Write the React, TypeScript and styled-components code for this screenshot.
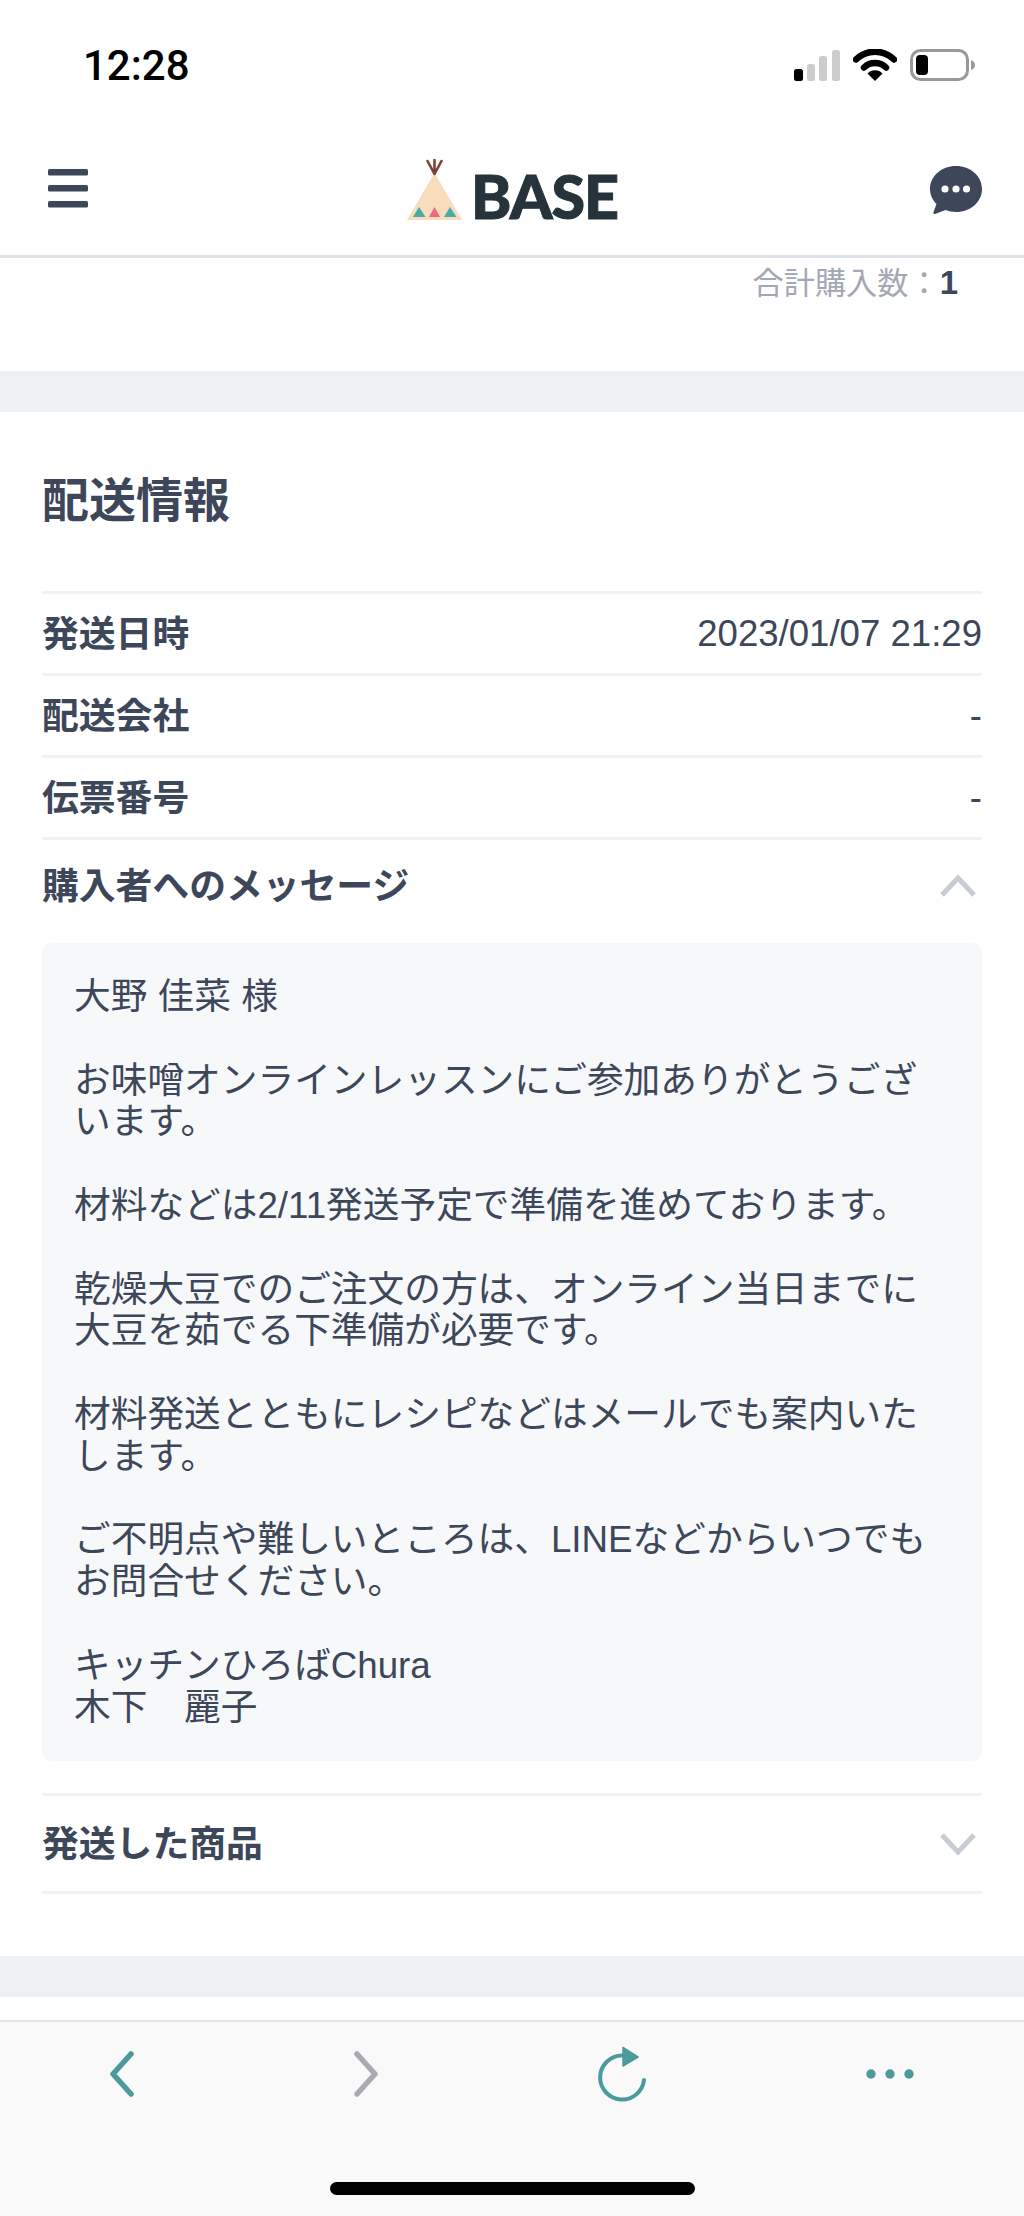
import React from "react";
import styled, { createGlobalStyle } from "styled-components";

const GlobalStyle = createGlobalStyle`
  html, body {
    margin: 0;
    padding: 0;
    background: #fff;
  }
`;

const Page = styled.div`
  display: flex;
  flex-direction: column;
  width: 1024px;
  height: 2216px;
  overflow: hidden;
  color: #3d4759;
  font-family: "Liberation Sans", "Noto Sans CJK JP", sans-serif;
`;

const Header = styled.header`
  flex: none;
  height: 258px;
  box-sizing: border-box;
  border-bottom: 3px solid #dfe3ea;
`;

const StatusBar = styled.div`
  display: flex;
  align-items: center;
  justify-content: space-between;
  height: 130px;
  padding: 0 48px 0 83px;
`;

const Time = styled.span`
  font-family: Roboto, "Liberation Sans", sans-serif;
  font-size: 42px;
  font-weight: 500;
  color: #000;
`;

const StatusIcons = styled.div`
  display: flex;
  align-items: center;
  gap: 13px;
`;

const Nav = styled.nav`
  display: grid;
  grid-template-columns: 1fr auto 1fr;
  align-items: center;
  height: 125px;
  padding: 0 42px 5px;
  box-sizing: border-box;
`;

const NavLeft = styled.div`
  display: flex;
  padding-left: 6px;
`;

const NavRight = styled.div`
  display: flex;
  justify-content: flex-end;
`;

const Logo = styled.div`
  display: flex;
  align-items: flex-end;
  gap: 7px;
`;

const LogoText = styled.span`
  font-family: Lato, "Liberation Sans", sans-serif;
  font-size: 61px;
  font-weight: 900;
  line-height: 46px;
  color: #27333a;
  letter-spacing: -1px;
  padding-bottom: 2px;
  -webkit-text-stroke: 1px #27333a;
`;

const Main = styled.main`
  flex: 1;
  min-height: 0;
`;

const TotalRow = styled.div`
  height: 113px;
  box-sizing: border-box;
  padding: 7px 66px 0 0;
  text-align: right;
  font-size: 31.2px;
  line-height: 36px;
  color: #a3a8b4;
`;

const TotalCount = styled.b`
  font-size: 33px;
  color: #3d4759;
`;

const Band = styled.div`
  height: 41px;
  background: #eff0f4;
`;

const Card = styled.section`
  padding: 0 42px 62px;
`;

const Title = styled.h2`
  margin: 0;
  padding: 66px 0 67px;
  font-size: 47px;
  line-height: 46px;
  font-weight: 700;
`;

const Row = styled.div<{ $height?: number; $closing?: boolean }>`
  display: flex;
  align-items: center;
  justify-content: space-between;
  height: ${(p) => p.$height ?? 82}px;
  box-sizing: border-box;
  border-top: 3px solid #f1f2f5;
  border-bottom: ${(p) => (p.$closing ? "3px solid #f1f2f5" : "none")};
  font-size: 36.8px;
`;

const Label = styled.span`
  font-weight: 700;
  margin-bottom: 5px;
`;

const Value = styled.span`
  font-size: 36.6px;
  font-weight: 400;
`;

const Chevron = styled.svg`
  margin-right: 6px;
`;

const MessageBox = styled.div`
  margin: 12px 0 32px;
  padding: 33px 32px;
  border-radius: 10px;
  background: #f7f8fa;
  font-size: 36.7px;
  line-height: 41.8px;
  white-space: pre;
`;

const Toolbar = styled.footer`
  flex: none;
  display: flex;
  flex-direction: column;
  height: 196px;
  box-sizing: border-box;
  border-top: 2px solid #e3e3e3;
  background: #f9f9f9;
`;

const ToolbarIcons = styled.div`
  display: flex;
  justify-content: space-between;
  padding: 22px 110px 0;
`;

const HomeBar = styled.div`
  align-self: center;
  width: 365px;
  height: 13px;
  margin-top: 78px;
  border-radius: 7px;
  background: #000;
`;

const message = `大野 佳菜 様

お味噌オンラインレッスンにご参加ありがとうござ
います。

材料などは2/11発送予定で準備を進めております。

乾燥大豆でのご注文の方は、オンライン当日までに
大豆を茹でる下準備が必要です。

材料発送とともにレシピなどはメールでも案内いた
します。

ご不明点や難しいところは、LINEなどからいつでも
お問合せください。

キッチンひろばChura
木下　麗子`;

const details = [
  { label: "発送日時", value: "2023/01/07 21:29" },
  { label: "配送会社", value: "-" },
  { label: "伝票番号", value: "-" },
];

const SignalIcon = () => (
  <svg width="46" height="31" viewBox="0 0 46 31">
    <rect x="0" y="19" width="9" height="12" rx="2.5" fill="#000" />
    <rect x="13" y="14" width="8" height="17" rx="2.5" fill="#ccc" />
    <rect x="25" y="6" width="8" height="25" rx="2.5" fill="#ccc" />
    <rect x="38" y="0" width="8" height="31" rx="2.5" fill="#ccc" />
  </svg>
);

const WifiIcon = () => (
  <svg width="44" height="32" viewBox="0 0 44 32">
    <path d="M3 10.5A27 27 0 0 1 41 10.5" fill="none" stroke="#000" strokeWidth="6.5" strokeLinecap="round" />
    <path d="M11 18.5A16 16 0 0 1 33 18.5" fill="none" stroke="#000" strokeWidth="6.5" strokeLinecap="round" />
    <path d="M22 32L14.5 24.5A10.5 10.5 0 0 1 29.5 24.5Z" fill="#000" />
  </svg>
);

const BatteryIcon = () => (
  <svg width="66" height="32" viewBox="0 0 66 32">
    <rect x="1.5" y="1.5" width="56" height="29" rx="9" fill="none" stroke="#999" strokeWidth="3" />
    <rect x="6" y="6" width="12" height="20" rx="4" fill="#000" />
    <path d="M61 11C64 12 65 14 65 16S64 20 61 21Z" fill="#999" />
  </svg>
);

const MenuIcon = () => (
  <svg width="40" height="52" viewBox="0 0 40 52">
    <rect x="0" y="5" width="40" height="6.5" rx="1.5" fill="#3d4759" />
    <rect x="0" y="21" width="40" height="6.5" rx="1.5" fill="#3d4759" />
    <rect x="0" y="37" width="40" height="6.5" rx="1.5" fill="#3d4759" />
  </svg>
);

const TeepeeIcon = () => (
  <svg width="58" height="62" viewBox="0 0 58 62">
    <path d="M28.5 14L56 61H1Z" fill="#f9dcbc" />
    <path d="M28.5 15V1M28.5 15L21.5 2M28.5 15L35.5 2" fill="none" stroke="#7d4236" strokeWidth="2.6" strokeLinecap="round" />
    <path d="M13 48L19.5 58H7Z" fill="#45aca8" />
    <path d="M28.5 48L34 58H23Z" fill="#ea6a85" />
    <path d="M44 48L50.5 58H38Z" fill="#45aca8" />
  </svg>
);

const ChatIcon = () => (
  <svg width="52" height="48" viewBox="0 0 52 48">
    <path d="M26 0C40.5 0 52 10 52 23S40.5 46 26 46C22 46 18.5 45.3 15.5 44L5 48C3.5 48.3 3 47 3.5 46L6.5 38C2.5 34 0 29 0 23C0 10 11.5 0 26 0Z" fill="#3d4759" />
    <circle cx="15" cy="23" r="3.6" fill="#fff" />
    <circle cx="26" cy="23" r="3.6" fill="#fff" />
    <circle cx="36.5" cy="23" r="3.6" fill="#fff" />
  </svg>
);

const ChevronIcon = ({ up }: { up?: boolean }) => (
  <Chevron width="36" height="22" viewBox="0 0 36 22">
    <path d={up ? "M2 20L18 3L34 20" : "M2 2L18 19L34 2"} fill="none" stroke="#c8ccd5" strokeWidth="5" />
  </Chevron>
);

const BackIcon = () => (
  <svg width="24" height="60" viewBox="0 0 24 60">
    <path d="M21 10L3 30L21 50" fill="none" stroke="#4b9a9c" strokeWidth="5.5" strokeLinecap="round" strokeLinejoin="round" />
  </svg>
);

const ForwardIcon = () => (
  <svg width="24" height="60" viewBox="0 0 24 60">
    <path d="M3 10L21 30L3 50" fill="none" stroke="#a9abb3" strokeWidth="5.5" strokeLinecap="round" strokeLinejoin="round" />
  </svg>
);

const ReloadIcon = () => (
  <svg width="48" height="60" viewBox="0 0 48 60">
    <path d="M46 36A22 22 0 1 1 24 11.5" fill="none" stroke="#4b9a9c" strokeWidth="4" strokeLinecap="round" />
    <path d="M25 3.5L40 13L25 22Z" fill="#4b9a9c" stroke="#4b9a9c" strokeWidth="1.5" strokeLinejoin="round" />
  </svg>
);

const MoreIcon = () => (
  <svg width="48" height="60" viewBox="0 0 48 60">
    <circle cx="5" cy="30" r="4.7" fill="#4b9a9c" />
    <circle cx="24" cy="30" r="4.7" fill="#4b9a9c" />
    <circle cx="43" cy="30" r="4.7" fill="#4b9a9c" />
  </svg>
);

export default function App() {
  return (
    <Page>
      <GlobalStyle />
      <Header>
        <StatusBar>
          <Time>12:28</Time>
          <StatusIcons>
            <SignalIcon />
            <WifiIcon />
            <BatteryIcon />
          </StatusIcons>
        </StatusBar>
        <Nav>
          <NavLeft>
            <MenuIcon />
          </NavLeft>
          <Logo>
            <TeepeeIcon />
            <LogoText>BASE</LogoText>
          </Logo>
          <NavRight>
            <ChatIcon />
          </NavRight>
        </Nav>
      </Header>
      <Main>
        <TotalRow>
          合計購入数：<TotalCount>1</TotalCount>
        </TotalRow>
        <Band />
        <Card>
          <Title>配送情報</Title>
          {details.map((item) => (
            <Row key={item.label}>
              <Label>{item.label}</Label>
              <Value>{item.value}</Value>
            </Row>
          ))}
          <Row $height={94}>
            <Label>購入者へのメッセージ</Label>
            <ChevronIcon up />
          </Row>
          <MessageBox>{message}</MessageBox>
          <Row $height={101} $closing>
            <Label>発送した商品</Label>
            <ChevronIcon />
          </Row>
        </Card>
        <Band />
      </Main>
      <Toolbar>
        <ToolbarIcons>
          <BackIcon />
          <ForwardIcon />
          <ReloadIcon />
          <MoreIcon />
        </ToolbarIcons>
        <HomeBar />
      </Toolbar>
    </Page>
  );
}
